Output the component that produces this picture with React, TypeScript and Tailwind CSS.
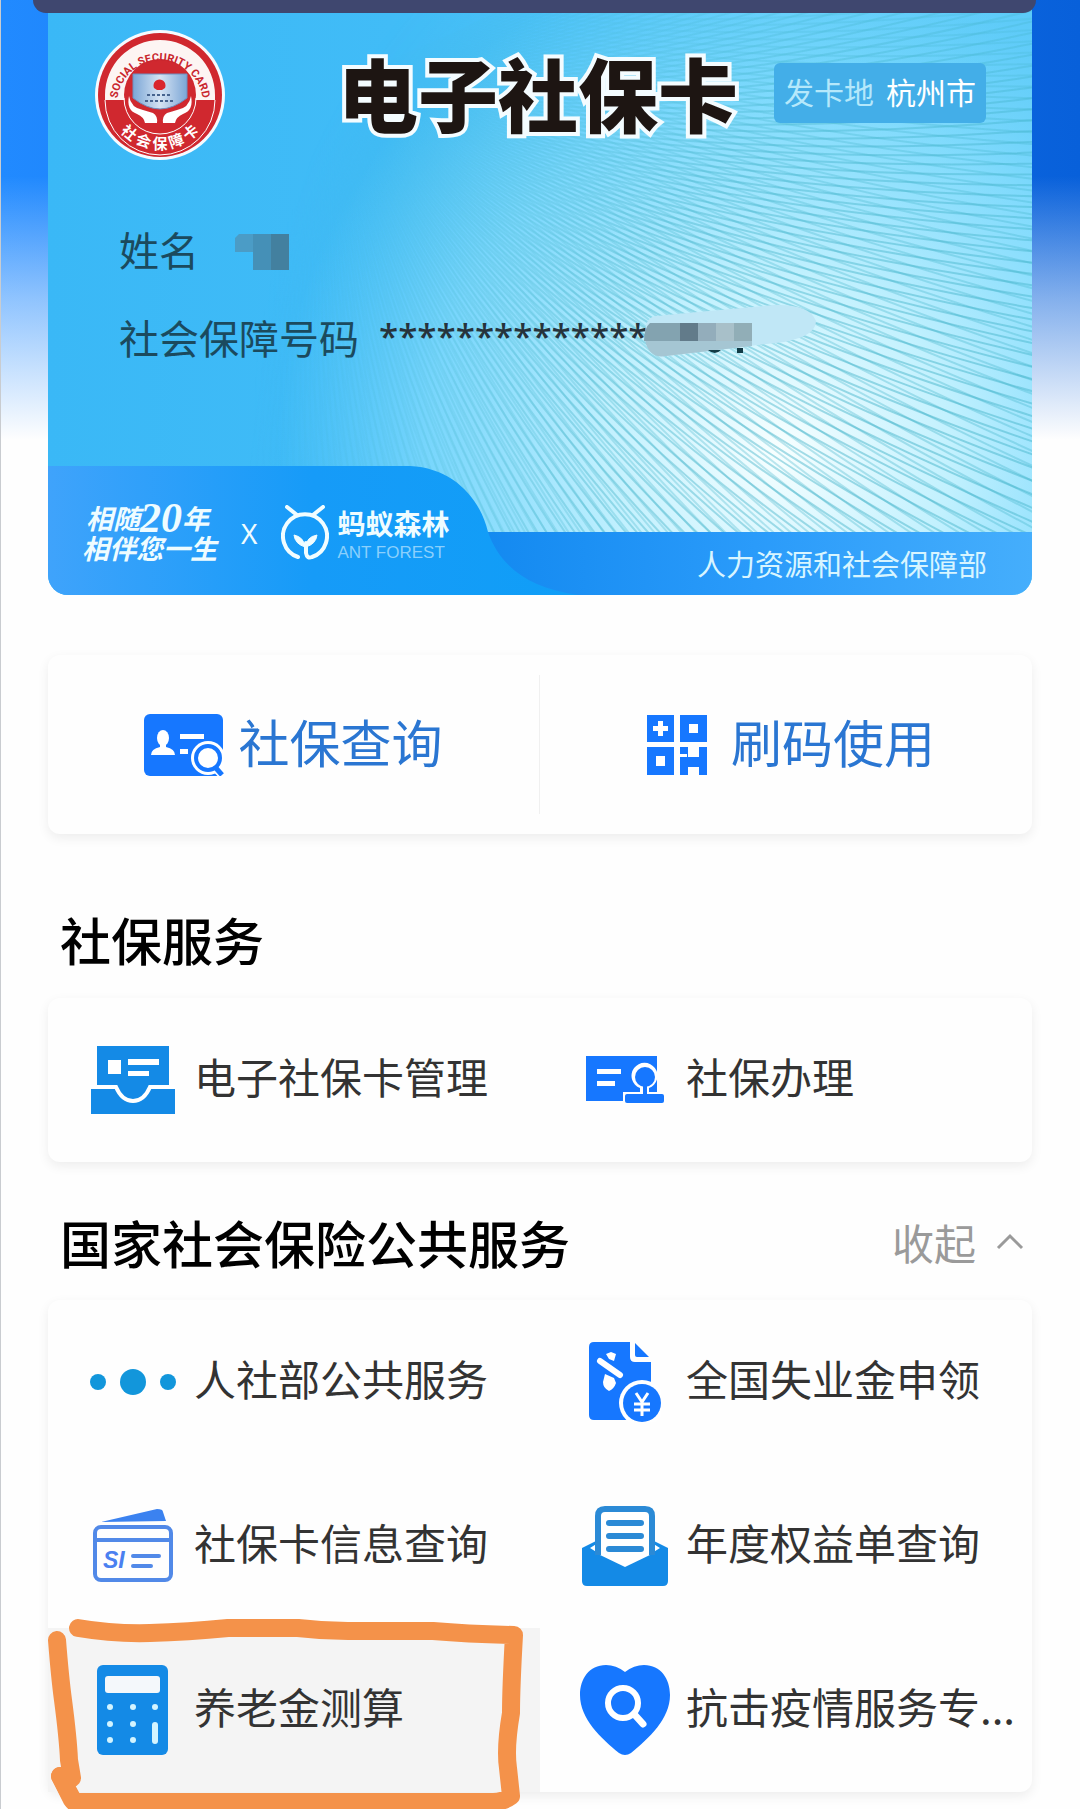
import React, { useState } from 'react';

const BLUE = '#1677ff';
const SKY = '#148ae6';

// Rays fanning out of one point, used for the card's guilloche pattern
function fan(cx: number, cy: number, from: number, to: number, step: number) {
    let d = '';
    for (let a = from; a <= to; a += step) {
        const r = (a * Math.PI) / 180;
        const bend = ((a + 16) * Math.PI) / 180;
        const mx = cx + Math.cos(bend) * 420;
        const my = cy + Math.sin(bend) * 420;
        const x = cx + Math.cos(r) * 1100;
        const y = cy + Math.sin(r) * 1100;
        d += `M${cx} ${cy}Q${mx.toFixed(1)} ${my.toFixed(1)} ${x.toFixed(1)} ${y.toFixed(1)}`;
    }
    return d;
}

function CardArt() {
    return (
        <svg
            className="absolute inset-0 w-full h-full"
            viewBox="0 0 984 595"
            preserveAspectRatio="none"
            aria-hidden="true"
        >
            <defs>
                <linearGradient id="base" x1="0" y1="0" x2="1" y2="0">
                    <stop offset="0" stopColor="#3ab8f6" />
                    <stop offset="0.35" stopColor="#41bcf7" />
                    <stop offset="0.75" stopColor="#5ccbf9" />
                    <stop offset="1" stopColor="#5ccaf8" />
                </linearGradient>
                <radialGradient
                    id="glow"
                    gradientUnits="userSpaceOnUse"
                    cx="730"
                    cy="450"
                    r="500"
                >
                    <stop offset="0" stopColor="#f8ffff" />
                    <stop offset="0.35" stopColor="#cdf5ff" stopOpacity="0.9" />
                    <stop offset="0.7" stopColor="#94e3ff" stopOpacity="0.65" />
                    <stop offset="1" stopColor="#7bdafc" stopOpacity="0" />
                </radialGradient>
                <radialGradient
                    id="fade"
                    gradientUnits="userSpaceOnUse"
                    cx="880"
                    cy="440"
                    r="680"
                >
                    <stop offset="0" stopColor="#fff" />
                    <stop offset="0.5" stopColor="#fff" stopOpacity="0.8" />
                    <stop offset="0.75" stopColor="#fff" stopOpacity="0.3" />
                    <stop offset="1" stopColor="#fff" stopOpacity="0" />
                </radialGradient>
                <mask id="lines">
                    <rect width="984" height="595" fill="url(#fade)" />
                </mask>
            </defs>
            <rect width="984" height="595" fill="url(#base)" />
            <rect width="984" height="595" fill="url(#glow)" />
            <g mask="url(#lines)" fill="none" stroke="#43b3c9">
                <path
                    d={fan(290, 80, -35, 95, 0.9)}
                    strokeWidth="2"
                    opacity="0.5"
                />
                <path
                    d={fan(260, -20, -25, 100, 0.9)}
                    strokeWidth="2"
                    opacity="0.36"
                />
            </g>
        </svg>
    );
}

function Seal() {
    return (
        <svg width="130" height="130" viewBox="0 0 130 130">
            <defs>
                <path id="arcTop" d="M22 74A43 43 0 1 1 108 74" />
                <path id="arcBottom" d="M11 65A54 54 0 0 0 119 65" />
                <linearGradient id="chip" x1="0" x2="1">
                    <stop offset="0" stopColor="#7ba6d6" />
                    <stop offset="0.5" stopColor="#d5e3f3" />
                    <stop offset="1" stopColor="#7ba6d6" />
                </linearGradient>
            </defs>
            <circle cx="65" cy="65" r="65" fill="#f6fbff" />
            <circle cx="65" cy="65" r="62" fill="#d0282f" />
            <path d="M10 70V65A55 55 0 0 1 120 65V70Z" fill="#fdf5f3" />
            <path
                d="M10 70A55 55 0 0 0 120 70"
                fill="none"
                stroke="#fff"
                strokeWidth="1"
            />
            <circle cx="65" cy="65" r="36" fill="#d0282f" />
            <path
                d="M29 68A36 36 0 0 0 101 68"
                fill="none"
                stroke="#fff"
                strokeWidth="1"
            />
            <path
                d="M38 44H92V68Q78 79 65 79Q52 79 38 68Z"
                fill="url(#chip)"
                stroke="#6f8fc0"
            />
            <path d="M59 58a6 6 0 1 1 11 0l-3 2h-5z" fill="#d9252c" />
            <path
                d="M52 65H77M50 71H80"
                stroke="#47648f"
                strokeWidth="2"
                strokeDasharray="3 2"
            />
            <path
                d="M34 66Q36 78 48 80L58 83Q63 86 62 93H50Q49 87 42 84Q31 80 34 66Z"
                fill="#fff"
            />
            <path
                d="M96 66Q94 78 82 80L72 83Q67 86 68 93H80Q81 87 88 84Q99 80 96 66Z"
                fill="#fff"
            />
            <text
                className="font-['Roboto',sans-serif] font-bold text-[11px]"
                fill="#c9262d"
                textAnchor="middle"
            >
                <textPath href="#arcTop" startOffset="50%">
                    SOCIAL SECURITY CARD
                </textPath>
            </text>
            <text
                className="font-['Noto_Sans_CJK_SC',sans-serif] font-bold text-[15px]"
                fill="#fff"
                textAnchor="middle"
            >
                <textPath href="#arcBottom" startOffset="50%">
                    社 会 保 障 卡
                </textPath>
            </text>
        </svg>
    );
}

function NameMosaic() {
    return (
        <svg width="54" height="36" viewBox="0 0 54 36" aria-hidden="true">
            <path d="M4 0H18V18H0V4Z" fill="#4b9cc6" />
            <rect x="18" width="18" height="36" fill="#4590b7" />
            <rect x="36" width="18" height="36" fill="#43809f" />
        </svg>
    );
}

function NumberMosaic() {
    return (
        <svg width="172" height="56" viewBox="0 0 172 56" aria-hidden="true">
            <path
                d="M2 34Q-1 14 12 12L54 8L130 1Q166 0 172 17Q172 32 140 38L22 52Q4 54 2 34Z"
                fill="#c0e7f6"
            />
            <path d="M1 36H108V42L22 52Q5 55 1 36Z" fill="#a5c6d3" />
            <path d="M6 19H40V37H0Q0 24 6 19Z" fill="#83a3b0" />
            <rect x="36" y="19" width="18" height="18" fill="#627b8a" />
            <rect x="54" y="19" width="18" height="18" fill="#93adbb" />
            <rect x="72" y="19" width="18" height="18" fill="#a8c0c9" />
            <rect x="90" y="19" width="18" height="18" fill="#91aeb7" />
            <path d="M64 46q7 6 13 0zM93 44h6v5h-6z" fill="#123b46" />
        </svg>
    );
}

function AntLogo() {
    return (
        <svg
            width="48"
            height="56"
            viewBox="0 0 48 56"
            fill="none"
            stroke="#f1fdff"
            strokeWidth="4"
            strokeLinecap="round"
            aria-hidden="true"
        >
            <path d="M17 52A22 22 0 1 1 31 52Q26 54 25 48V38" />
            <path d="M6 2L16 10M42 2L32 10" />
            <path
                d="M24 42Q23 32 13 30Q14 39 24 42ZM25 42Q25 32 36 30Q35 39 25 42Z"
                fill="#f1fdff"
                strokeWidth="1"
            />
        </svg>
    );
}

function IdSearchIcon() {
    return (
        <svg width="80" height="62" viewBox="0 0 80 62" aria-hidden="true">
            <rect width="79" height="62" rx="6" fill={BLUE} />
            <ellipse cx="19" cy="24" rx="6" ry="8" fill="#fff" />
            <path d="M16 29h6v4q9 2 9 8H7q0-6 9-8z" fill="#fff" />
            <path d="M36 20h24v5H36zM36 35h8v5h-8z" fill="#fff" />
            <circle cx="64" cy="44" r="17" fill="#fff" />
            <path d="M70 50l12 12" stroke="#fff" strokeWidth="12" />
            <circle
                cx="64"
                cy="44"
                r="12"
                fill="#fff"
                stroke={BLUE}
                strokeWidth="4"
            />
            <path d="M71 53l7 8" stroke={BLUE} strokeWidth="5" />
        </svg>
    );
}

function QrIcon() {
    return (
        <svg width="60" height="60" viewBox="0 0 60 60" aria-hidden="true">
            <path
                d="M0 0h27v27H0zM33 0h27v27H33zM0 32h27v28H0zM33 32h8v10h11V32h8v28h-8v-8H41v8h-8z"
                fill={BLUE}
            />
            <path
                d="M11 6h5v5h5v5h-5v5h-5v-5H6v-5h5zM42 9h9v9h-9zM9 41h9v10H9zM33 39h7v3h-7z"
                fill="#fff"
            />
        </svg>
    );
}

function TrayIcon() {
    return (
        <svg width="84" height="68" viewBox="0 0 84 68" aria-hidden="true">
            <path d="M6 0H78V40H84V68H0V40H6Z" fill={SKY} />
            <path d="M17 14h13v14H17zM37 13h31v6H37zM37 25h21v5H37z" fill="#fff" />
            <path
                d="M0 41H25Q31 55 42 55T59 41H84"
                fill="none"
                stroke="#fff"
                strokeWidth="4"
            />
        </svg>
    );
}

function StampIcon() {
    return (
        <svg width="78" height="48" viewBox="0 0 78 48" aria-hidden="true">
            <path d="M0 0H71V45H0Z" fill={BLUE} />
            <path d="M11 13h24v5H11zM11 25h18v5H11z" fill="#fff" />
            <path
                d="M37 48V36H54V32A13 13 0 1 1 63 32V36H78V48Z"
                fill="#fff"
            />
            <circle cx="59" cy="21" r="10" fill={BLUE} />
            <path d="M57 28h4v10h-4z" fill={BLUE} />
            <rect x="39" y="38" width="39" height="9" rx="2" fill={BLUE} />
        </svg>
    );
}

function DotsIcon() {
    return (
        <svg
            width="88"
            height="26"
            viewBox="0 0 88 26"
            fill="#1296db"
            aria-hidden="true"
        >
            <circle cx="9" cy="13" r="8" />
            <circle cx="44" cy="13" r="13" />
            <circle cx="79" cy="13" r="8" />
        </svg>
    );
}

function BenefitIcon() {
    return (
        <svg width="72" height="80" viewBox="0 0 72 80" aria-hidden="true">
            <path
                d="M5 0H41V15Q41 20 46 20H62V72Q62 78 57 78H5Q0 78 0 73V5Q0 0 5 0Z"
                fill={BLUE}
            />
            <path d="M46 1L60 15H48Q46 15 46 13Z" fill={BLUE} />
            <path d="M17 12l5-2 5 2-2 7-5-2zM16 32l9 4 2 5q-2 6-7 8-6-3-6-9z" fill="#fff" />
            <path
                d="M11 19L31 33"
                stroke="#fff"
                strokeWidth="6"
                strokeLinecap="round"
            />
            <circle cx="53" cy="61" r="23" fill="#fff" />
            <circle cx="53" cy="61" r="19" fill={BLUE} />
            <path
                d="M47 51l6 9 6-9M53 60v14M45 62h16M45 68h16"
                fill="none"
                stroke="#fff"
                strokeWidth="3"
            />
        </svg>
    );
}

function CardInfoIcon() {
    return (
        <svg width="80" height="74" viewBox="0 0 80 74" aria-hidden="true">
            <path d="M8 13L64 0Q70 0 70 3L73 12Z" fill="#3b82f0" />
            <rect
                x="2"
                y="18"
                width="76"
                height="53"
                rx="6"
                fill="none"
                stroke="#5189e8"
                strokeWidth="4"
            />
            <path
                d="M2 31H78M40 47H66M40 57H58"
                stroke="#5189e8"
                strokeWidth="4"
                strokeLinecap="round"
            />
            <text
                x="10"
                y="59"
                className="font-['Liberation_Sans'] text-[23px] font-bold italic"
                fill="#4a80f0"
            >
                SI
            </text>
        </svg>
    );
}

function EnvelopeIcon() {
    return (
        <svg width="86" height="80" viewBox="0 0 86 80" aria-hidden="true">
            <path d="M0 42L16 34H70L86 42V75Q86 80 81 80H5Q0 80 0 75Z" fill={SKY} />
            <path d="M8 42l8-5v10zM78 42l-8-5v10z" fill="#fff" />
            <path
                d="M16 48V10Q16 3 23 3H63Q70 3 70 10V48L43 61Z"
                fill="#fff"
            />
            <path
                d="M16 49V10Q16 3 23 3H63Q70 3 70 10V49"
                fill="none"
                stroke="#2b8ad6"
                strokeWidth="6"
            />
            <path
                d="M27 17H59M27 30H59M27 43H59"
                stroke="#2b8ad6"
                strokeWidth="6"
                strokeLinecap="round"
            />
        </svg>
    );
}

function CalculatorIcon() {
    return (
        <svg width="72" height="90" viewBox="0 0 72 90" aria-hidden="true">
            <rect width="71" height="90" rx="6" fill={SKY} />
            <rect x="8" y="11" width="55" height="17" rx="3" fill="#f4f8fb" />
            <g fill="#d3f4ff">
                <circle cx="13" cy="42" r="3" />
                <circle cx="36" cy="42" r="3" />
                <circle cx="58" cy="42" r="3" />
                <circle cx="13" cy="59" r="3" />
                <circle cx="36" cy="59" r="3" />
                <circle cx="13" cy="75" r="3" />
                <circle cx="36" cy="75" r="3" />
                <rect x="55" y="57" width="6" height="22" rx="3" />
            </g>
        </svg>
    );
}

function HeartIcon() {
    return (
        <svg width="90" height="90" viewBox="0 0 90 90" aria-hidden="true">
            <path
                d="M45 7Q54 0 64 0C81 0 90 14 90 30C90 54 69 73 51 88Q45 92 39 88C21 73 0 54 0 30C0 14 9 0 26 0Q36 0 45 7Z"
                fill={BLUE}
            />
            <circle
                cx="43"
                cy="38"
                r="15"
                fill="none"
                stroke="#fff"
                strokeWidth="6"
            />
            <path
                d="M54 49L63 59"
                stroke="#fff"
                strokeWidth="7"
                strokeLinecap="round"
            />
        </svg>
    );
}

function Marker() {
    return (
        <svg
            className="absolute left-0 top-0 overflow-visible pointer-events-none"
            width="492"
            height="164"
            viewBox="0 0 492 164"
            fill="none"
            stroke="#f4924a"
            strokeWidth="18"
            strokeLinecap="round"
            strokeLinejoin="round"
            aria-hidden="true"
        >
            <path d="M30 0Q65 6 102 5Q140 4 180 0H250Q275 3 300 3H385Q420 6 466 7Q463 60 463 85Q457 120 460 140L463 168Q455 174 445 174H26L12 148" />
            <path d="M9 12Q12 50 15 72Q20 110 21 132L24 150L12 148L24 172" />
        </svg>
    );
}

type ServiceProps = {
    icon: React.ReactNode;
    label: string;
    marked?: boolean;
};

function Service({ icon, label, marked }: ServiceProps) {
    return (
        <button
            type="button"
            className={
                marked
                    ? 'relative flex items-center gap-4 h-[164px] pl-10 bg-[#f4f4f4] text-left'
                    : 'flex items-center gap-4 h-[164px] pl-10 text-left'
            }
        >
            <span className="flex justify-center w-[90px] shrink-0">{icon}</span>
            <span className="pb-2 text-[42px] leading-[60px] whitespace-nowrap text-[#333333]">
                {label}
            </span>
            {marked && <Marker />}
        </button>
    );
}

const panel =
    'grid grid-cols-2 rounded-xl bg-[#fefefe] shadow-[0_4px_12px_rgba(0,0,0,0.07)]';

const publicServices: ServiceProps[] = [
    { icon: <DotsIcon />, label: '人社部公共服务' },
    { icon: <BenefitIcon />, label: '全国失业金申领' },
    { icon: <CardInfoIcon />, label: '社保卡信息查询' },
    { icon: <EnvelopeIcon />, label: '年度权益单查询' },
    { icon: <CalculatorIcon />, label: '养老金测算', marked: true },
    { icon: <HeartIcon />, label: '抗击疫情服务专...' },
];

export default function App() {
    const [open, setOpen] = useState(true);

    return (
        <main className="relative overflow-hidden min-h-screen border-l border-[#c9ccd0] pl-[47px] pr-12 pb-[17px] bg-[#fefefe] font-['Noto_Sans_CJK_SC',sans-serif]">
            <div className="absolute inset-x-0 top-0 h-[440px] bg-[linear-gradient(to_bottom,rgba(254,254,254,0)_40%,rgba(254,254,254,0.5)_68%,#fefefe_100%),linear-gradient(to_right,#218aff,#0860da)]" />

            <section className="relative overflow-hidden rounded-b-[20px] pt-[30px]">
                <CardArt />
                <div className="relative flex items-center pl-[47px] pr-[46px]">
                    <Seal />
                    <h1 className="ml-auto mr-9 pb-2 text-[80px] leading-[88px] font-black text-[#1d1512] [-webkit-text-stroke:8px_#f4fcff] [paint-order:stroke_fill]">
                        电子社保卡
                    </h1>
                    <p className="flex gap-3 mb-1 rounded-md px-[10px] pb-1 text-[30px] leading-[56px] bg-[#43aee8] text-white">
                        <span className="text-[#b5e8fb]">发卡地</span>
                        <span>杭州市</span>
                    </p>
                </div>

                <dl className="relative pl-[71px] text-[40px] leading-[56px] text-[#1b4a5e]">
                    <div className="flex items-center gap-9 h-14 mt-16">
                        <dt className="pb-1.5">姓名</dt>
                        <dd>
                            <NameMosaic />
                        </dd>
                    </div>
                    <div className="flex items-center h-14 mt-8">
                        <dt className="pb-1.5">社会保障号码</dt>
                        <dd className="flex items-center ml-5 font-['Noto_Sans',sans-serif] text-[35px] font-medium text-[#26333c]">
                            <span className="pb-2">**************</span>
                            <span className="-ml-1 -mt-4">
                                <NumberMosaic />
                            </span>
                        </dd>
                    </div>
                </dl>

                <div className="relative flex justify-between h-[129px] mt-[98px]">
                    <svg
                        className="absolute inset-0 w-full h-full"
                        viewBox="0 0 984 129"
                        preserveAspectRatio="none"
                        aria-hidden="true"
                    >
                        <defs>
                            <linearGradient id="band" x1="0" x2="1">
                                <stop offset="0" stopColor="#1389f0" />
                                <stop offset="0.5" stopColor="#2a9bfa" />
                                <stop offset="1" stopColor="#45aefc" />
                            </linearGradient>
                            <linearGradient id="tab" x1="0" x2="1">
                                <stop offset="0" stopColor="#3fa3fb" />
                                <stop offset="0.5" stopColor="#169bf8" />
                                <stop offset="1" stopColor="#109ef7" />
                            </linearGradient>
                        </defs>
                        <rect x="430" y="66" width="554" height="63" fill="url(#band)" />
                        <path
                            d="M0 0H362C405 2 432 32 440 66C452 100 480 122 530 129H0Z"
                            fill="url(#tab)"
                        />
                    </svg>
                    <div className="relative flex items-center pt-1 pl-[34px] text-[#effcff]">
                        <div className="text-[27px] leading-[30px] font-bold italic">
                            <p className="flex items-end h-[30px] pl-1">
                                相随
                                <span className="font-['Liberation_Serif',serif] text-[42px]">
                                    20
                                </span>
                                年
                            </p>
                            <p>相伴您一生</p>
                        </div>
                        <span className="ml-6 text-[28px] leading-[40px] font-['Noto_Sans',sans-serif]">
                            X
                        </span>
                        <span className="ml-6">
                            <AntLogo />
                        </span>
                        <div className="ml-2">
                            <p className="text-[28px] leading-[36px] font-bold">
                                蚂蚁森林
                            </p>
                            <p className="mt-1 text-[17px] leading-[16px] font-['Liberation_Sans',sans-serif] text-[#8bd0fc]">
                                ANT FOREST
                            </p>
                        </div>
                    </div>
                    <p className="relative self-end pr-[45px] text-[29px] leading-[63px] text-[#d8f5ff]">
                        人力资源和社会保障部
                    </p>
                </div>
            </section>
            <div className="absolute left-8 right-[44px] top-0 h-[13px] rounded-b-[20px] bg-[#3f476f]" />

            <nav className="relative grid grid-cols-2 mt-[60px] py-5 rounded-xl bg-[#fefefe] text-[#2a76d2] shadow-[0_4px_12px_rgba(0,0,0,0.07)]">
                <button
                    type="button"
                    className="flex items-center justify-center gap-[14px] h-[139px] border-r border-[#f0f0f0]"
                >
                    <IdSearchIcon />
                    <span className="pb-2 text-[51px] leading-[72px]">
                        社保查询
                    </span>
                </button>
                <button
                    type="button"
                    className="flex items-center justify-center gap-[14px] h-[139px]"
                >
                    <span className="flex justify-center w-20">
                        <QrIcon />
                    </span>
                    <span className="pb-2 text-[51px] leading-[72px]">
                        刷码使用
                    </span>
                </button>
            </nav>

            <section className="relative mt-[72px]">
                <h2 className="pl-3 pb-1.5 mb-5 text-[51px] leading-[66px] font-medium text-black">
                    社保服务
                </h2>
                <div className={panel}>
                    <Service icon={<TrayIcon />} label="电子社保卡管理" />
                    <Service icon={<StampIcon />} label="社保办理" />
                </div>
            </section>

            <section className="relative mt-[46px]">
                <div className="flex items-center justify-between pl-3 pr-2 pb-1 mb-5">
                    <h2 className="text-[51px] leading-[68px] font-medium text-black">
                        国家社会保险公共服务
                    </h2>
                    <button
                        type="button"
                        onClick={() => setOpen(!open)}
                        className="flex items-center gap-5 text-[42px] leading-[60px] text-[#9a9a9a]"
                    >
                        {open ? '收起' : '展开'}
                        <svg
                            className={open ? '' : 'rotate-180'}
                            width="28"
                            height="18"
                            viewBox="0 0 28 18"
                            fill="none"
                            stroke="currentColor"
                            strokeWidth="3"
                            aria-hidden="true"
                        >
                            <path d="M2 15L14 3L26 15" />
                        </svg>
                    </button>
                </div>
                {open && (
                    <div className={panel}>
                        {publicServices.map((item) => (
                            <Service key={item.label} {...item} />
                        ))}
                    </div>
                )}
            </section>
        </main>
    );
}
